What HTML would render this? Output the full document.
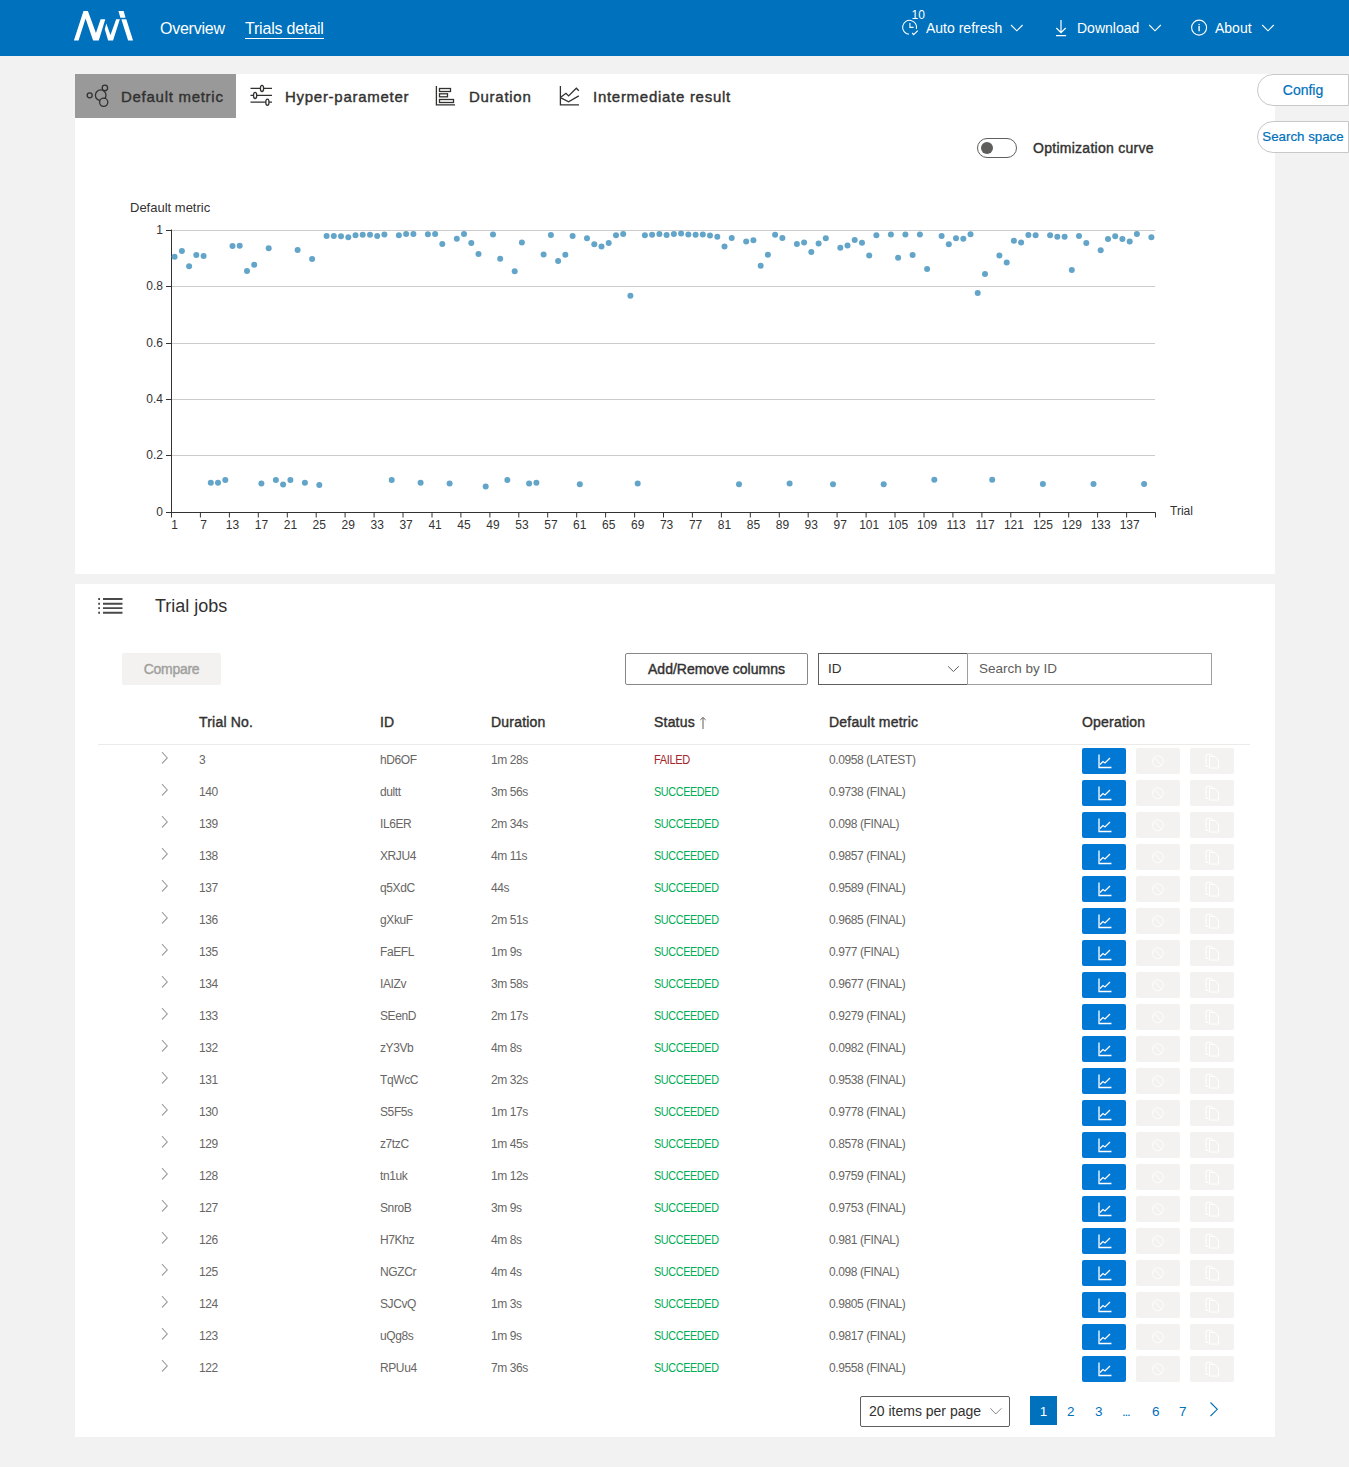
<!DOCTYPE html>
<html><head><meta charset="utf-8"><style>
*{box-sizing:border-box;margin:0;padding:0}
html,body{width:1349px;height:1467px;overflow:hidden;background:#f2f2f2;font-family:"Liberation Sans", sans-serif;color:#323130}
.abs{position:absolute}
#nav{position:absolute;left:0;top:0;width:1349px;height:56px;background:#0071bc;color:#fff}
#nav .t{position:absolute;font-size:16px;line-height:20px;white-space:nowrap}
#nav .r{position:absolute;font-size:14px;line-height:18px;white-space:nowrap}
.panel{position:absolute;left:75px;width:1200px;background:#fff}
.tab{position:absolute;top:74.5px;height:44px;font-size:15px;-webkit-text-stroke:0.4px #323130;line-height:44px;white-space:nowrap;letter-spacing:0.72px;color:#323130}
.side{position:absolute;left:1257px;width:92px;height:32px;border:1px solid #c8c8c8;-webkit-text-stroke:0.2px #0071bc;border-radius:16px 0 0 16px;background:#fff;color:#0071bc;font-size:14px;line-height:30px;text-align:center;white-space:nowrap}
.row{position:absolute;left:98px;width:1152px;height:32px}
.row .c{position:absolute;top:0;line-height:32px;font-size:12px;color:#686664;white-space:nowrap;letter-spacing:-0.4px}
.row .failed{color:#a4262c;transform:scaleX(0.92);transform-origin:0 50%}
.row .succ{color:#00ad56;transform:scaleX(0.9);transform-origin:0 50%}
.chev{position:absolute;left:62px;top:0}
.btn{position:absolute;top:4px;width:44px;height:26px;border-radius:2px}
.b1{left:984px;background:#0078d4}
.b1 svg{position:absolute;left:15px;top:5px}
.b2{left:1038px;background:#f3f2f1}
.b3{left:1092px;background:#f3f2f1}
.pg{top:1396px;font-size:13.5px;line-height:31px;color:#0071bc}
.hd{position:absolute;top:712px;font-size:14px;-webkit-text-stroke:0.4px #323130;line-height:20px;color:#323130;white-space:nowrap;letter-spacing:0.2px}
</style></head><body>
<div id="nav">
  <svg class="abs" style="left:70px;top:6px" width="70" height="40" viewBox="0 0 1349 771">
    <g fill="#fff">
      <polygon points="75,665 260,95 345,95 500,520 590,255 680,255 555,665 445,665 300,240 165,665"/>
      <polygon points="670,450 700,335 780,560 890,255 960,255 830,665 735,665"/>
      <polygon points="990,255 1085,255 1215,665 1120,665"/>
      <polygon points="935,95 1035,95 1070,225 970,225"/>
    </g>
  </svg>
  <svg class="abs" style="left:0;top:0" width="1349" height="56">
    <g fill="none" stroke="#fff" stroke-width="1.1">
      <path d="M909 34.3 A7 7 0 1 1 916.4 29"/>
      <path d="M909.9 23 V27.4 H913.6"/>
      <path d="M912.2 33 L913.6 34.6 L917.8 30.6" stroke-width="1.2"/>
      <path d="M1011 25 L1016.8 30.8 L1022.6 25"/>
      <path d="M1061 20 V32.3 M1056.3 28 L1061 32.6 L1065.7 28 M1056 35.6 H1066.1" stroke-width="1.2"/>
      <path d="M1149.2 25 L1155 30.8 L1160.8 25"/>
      <circle cx="1199.1" cy="27.6" r="7.5"/>
      <path d="M1199.1 26 V31.2" stroke-width="1.4"/>
      <path d="M1262.2 25 L1268 30.8 L1273.8 25"/>
    </g>
    <rect x="1198.4" y="23.9" width="1.4" height="1.3" fill="#fff"/>
  </svg>
  <div class="t" style="left:160px;top:19px;letter-spacing:-0.25px">Overview</div>
  <div class="t" style="left:245px;top:19px;border-bottom:1px solid #fff;height:20px;letter-spacing:-0.2px">Trials detail</div>
  <div class="r" style="left:926px;top:19px">Auto refresh</div>
  <div class="r" style="left:911.5px;top:6px;font-size:12px">10</div>
  <div class="r" style="left:1077px;top:19px">Download</div>
  <div class="r" style="left:1215px;top:19px">About</div>
</div>
<div class="panel" style="top:74px;height:500px"></div>
<div class="abs" style="left:75px;top:74px;width:161px;height:44px;background:#999"></div>
<svg class="abs" style="left:0;top:0" width="600" height="120">
  <g fill="none" stroke="#323130" stroke-width="1.3">
    <circle cx="100.7" cy="95.2" r="5.3" fill="#999"/>
    <circle cx="104.9" cy="87.9" r="2.7" fill="#999"/>
    <circle cx="103.7" cy="102.3" r="4.1" fill="#999"/>
    <circle cx="89.7" cy="95.3" r="2.5"/>
    <path d="M250.5 88.4 H272 M250.5 95.4 H272 M250.5 102.2 H272"/>
    <ellipse cx="262" cy="88.4" rx="1.6" ry="3.1" fill="#fff"/>
    <ellipse cx="255.1" cy="95.4" rx="1.6" ry="3.1" fill="#fff"/>
    <ellipse cx="267.4" cy="102.3" rx="1.6" ry="3.1" fill="#fff"/>
    <path d="M436.4 86 V104.8 H455"/>
    <rect x="439.5" y="88.5" width="11" height="3"/>
    <rect x="439.5" y="93.8" width="8" height="3"/>
    <rect x="439.5" y="99.5" width="14" height="3"/>
    <path d="M560.4 86 V104.8 H579"/>
    <path d="M561 97.1 L566 93.3 L568.6 95.9 L576.3 88.2 L578.8 90.8"/>
    <path d="M561 97.8 L568.6 101.8 L578.8 95.9"/>
  </g>
</svg>
<div class="tab" style="left:121px">Default metric</div>
<div class="tab" style="left:285px">Hyper-parameter</div>
<div class="tab" style="left:469px">Duration</div>
<div class="tab" style="left:593px">Intermediate result</div>
<div class="side" style="top:74px">Config</div>
<div class="side" style="top:121px;font-size:13.3px">Search space</div>
<div class="abs" style="left:977px;top:138px;width:40px;height:20px;border:1px solid #605e5c;border-radius:10px"></div>
<div class="abs" style="left:981px;top:142px;width:12px;height:12px;border-radius:6px;background:#605e5c"></div>
<div class="abs" style="left:1033px;top:139px;font-size:14px;-webkit-text-stroke:0.4px #323130;line-height:18px;white-space:nowrap;letter-spacing:0.27px">Optimization curve</div>
<svg class="chart" width="1349" height="600" viewBox="0 0 1349 600" style="position:absolute;left:0;top:0"><g font-family="Liberation Sans, sans-serif" font-size="12" fill="#333"><line x1="171" y1="455.5" x2="1155" y2="455.5" stroke="#ccc" stroke-width="1"/><line x1="171" y1="399.5" x2="1155" y2="399.5" stroke="#ccc" stroke-width="1"/><line x1="171" y1="343.5" x2="1155" y2="343.5" stroke="#ccc" stroke-width="1"/><line x1="171" y1="286.5" x2="1155" y2="286.5" stroke="#ccc" stroke-width="1"/><line x1="171" y1="230.5" x2="1155" y2="230.5" stroke="#ccc" stroke-width="1"/><line x1="171.5" y1="229.5" x2="171.5" y2="512.5" stroke="#333" stroke-width="1"/><line x1="166" y1="512.5" x2="171.5" y2="512.5" stroke="#333" stroke-width="1"/><text x="163" y="516.1" text-anchor="end">0</text><line x1="166" y1="455.5" x2="171.5" y2="455.5" stroke="#333" stroke-width="1"/><text x="163" y="459.1" text-anchor="end">0.2</text><line x1="166" y1="399.5" x2="171.5" y2="399.5" stroke="#333" stroke-width="1"/><text x="163" y="403.1" text-anchor="end">0.4</text><line x1="166" y1="343.5" x2="171.5" y2="343.5" stroke="#333" stroke-width="1"/><text x="163" y="347.1" text-anchor="end">0.6</text><line x1="166" y1="286.5" x2="171.5" y2="286.5" stroke="#333" stroke-width="1"/><text x="163" y="290.1" text-anchor="end">0.8</text><line x1="166" y1="230.5" x2="171.5" y2="230.5" stroke="#333" stroke-width="1"/><text x="163" y="234.1" text-anchor="end">1</text><line x1="171" y1="512.5" x2="1155.5" y2="512.5" stroke="#333" stroke-width="1"/><line x1="171.5" y1="512.5" x2="171.5" y2="517.5" stroke="#333" stroke-width="1"/><line x1="200.4" y1="512.5" x2="200.4" y2="517.5" stroke="#333" stroke-width="1"/><line x1="229.4" y1="512.5" x2="229.4" y2="517.5" stroke="#333" stroke-width="1"/><line x1="258.3" y1="512.5" x2="258.3" y2="517.5" stroke="#333" stroke-width="1"/><line x1="287.3" y1="512.5" x2="287.3" y2="517.5" stroke="#333" stroke-width="1"/><line x1="316.2" y1="512.5" x2="316.2" y2="517.5" stroke="#333" stroke-width="1"/><line x1="345.1" y1="512.5" x2="345.1" y2="517.5" stroke="#333" stroke-width="1"/><line x1="374.1" y1="512.5" x2="374.1" y2="517.5" stroke="#333" stroke-width="1"/><line x1="403.0" y1="512.5" x2="403.0" y2="517.5" stroke="#333" stroke-width="1"/><line x1="432.0" y1="512.5" x2="432.0" y2="517.5" stroke="#333" stroke-width="1"/><line x1="460.9" y1="512.5" x2="460.9" y2="517.5" stroke="#333" stroke-width="1"/><line x1="489.9" y1="512.5" x2="489.9" y2="517.5" stroke="#333" stroke-width="1"/><line x1="518.8" y1="512.5" x2="518.8" y2="517.5" stroke="#333" stroke-width="1"/><line x1="547.7" y1="512.5" x2="547.7" y2="517.5" stroke="#333" stroke-width="1"/><line x1="576.7" y1="512.5" x2="576.7" y2="517.5" stroke="#333" stroke-width="1"/><line x1="605.6" y1="512.5" x2="605.6" y2="517.5" stroke="#333" stroke-width="1"/><line x1="634.6" y1="512.5" x2="634.6" y2="517.5" stroke="#333" stroke-width="1"/><line x1="663.5" y1="512.5" x2="663.5" y2="517.5" stroke="#333" stroke-width="1"/><line x1="692.4" y1="512.5" x2="692.4" y2="517.5" stroke="#333" stroke-width="1"/><line x1="721.4" y1="512.5" x2="721.4" y2="517.5" stroke="#333" stroke-width="1"/><line x1="750.3" y1="512.5" x2="750.3" y2="517.5" stroke="#333" stroke-width="1"/><line x1="779.3" y1="512.5" x2="779.3" y2="517.5" stroke="#333" stroke-width="1"/><line x1="808.2" y1="512.5" x2="808.2" y2="517.5" stroke="#333" stroke-width="1"/><line x1="837.1" y1="512.5" x2="837.1" y2="517.5" stroke="#333" stroke-width="1"/><line x1="866.1" y1="512.5" x2="866.1" y2="517.5" stroke="#333" stroke-width="1"/><line x1="895.0" y1="512.5" x2="895.0" y2="517.5" stroke="#333" stroke-width="1"/><line x1="924.0" y1="512.5" x2="924.0" y2="517.5" stroke="#333" stroke-width="1"/><line x1="952.9" y1="512.5" x2="952.9" y2="517.5" stroke="#333" stroke-width="1"/><line x1="981.9" y1="512.5" x2="981.9" y2="517.5" stroke="#333" stroke-width="1"/><line x1="1010.8" y1="512.5" x2="1010.8" y2="517.5" stroke="#333" stroke-width="1"/><line x1="1039.7" y1="512.5" x2="1039.7" y2="517.5" stroke="#333" stroke-width="1"/><line x1="1068.7" y1="512.5" x2="1068.7" y2="517.5" stroke="#333" stroke-width="1"/><line x1="1097.6" y1="512.5" x2="1097.6" y2="517.5" stroke="#333" stroke-width="1"/><line x1="1126.6" y1="512.5" x2="1126.6" y2="517.5" stroke="#333" stroke-width="1"/><line x1="1155.5" y1="512.5" x2="1155.5" y2="517.5" stroke="#333" stroke-width="1"/><text x="174.6" y="529" text-anchor="middle">1</text><text x="203.6" y="529" text-anchor="middle">7</text><text x="232.5" y="529" text-anchor="middle">13</text><text x="261.4" y="529" text-anchor="middle">17</text><text x="290.4" y="529" text-anchor="middle">21</text><text x="319.3" y="529" text-anchor="middle">25</text><text x="348.3" y="529" text-anchor="middle">29</text><text x="377.2" y="529" text-anchor="middle">33</text><text x="406.1" y="529" text-anchor="middle">37</text><text x="435.1" y="529" text-anchor="middle">41</text><text x="464.0" y="529" text-anchor="middle">45</text><text x="493.0" y="529" text-anchor="middle">49</text><text x="521.9" y="529" text-anchor="middle">53</text><text x="550.9" y="529" text-anchor="middle">57</text><text x="579.8" y="529" text-anchor="middle">61</text><text x="608.7" y="529" text-anchor="middle">65</text><text x="637.7" y="529" text-anchor="middle">69</text><text x="666.6" y="529" text-anchor="middle">73</text><text x="695.6" y="529" text-anchor="middle">77</text><text x="724.5" y="529" text-anchor="middle">81</text><text x="753.4" y="529" text-anchor="middle">85</text><text x="782.4" y="529" text-anchor="middle">89</text><text x="811.3" y="529" text-anchor="middle">93</text><text x="840.3" y="529" text-anchor="middle">97</text><text x="869.2" y="529" text-anchor="middle">101</text><text x="898.1" y="529" text-anchor="middle">105</text><text x="927.1" y="529" text-anchor="middle">109</text><text x="956.0" y="529" text-anchor="middle">113</text><text x="985.0" y="529" text-anchor="middle">117</text><text x="1013.9" y="529" text-anchor="middle">121</text><text x="1042.9" y="529" text-anchor="middle">125</text><text x="1071.8" y="529" text-anchor="middle">129</text><text x="1100.7" y="529" text-anchor="middle">133</text><text x="1129.7" y="529" text-anchor="middle">137</text><text x="1170" y="515">Trial</text><text x="130" y="212" style="font-size:13px">Default metric</text></g><g fill="#63a4c9"><circle cx="174.6" cy="256.8" r="3"/><circle cx="181.9" cy="251.1" r="3"/><circle cx="189.1" cy="266.3" r="3"/><circle cx="196.3" cy="255.0" r="3"/><circle cx="203.6" cy="255.9" r="3"/><circle cx="210.8" cy="482.8" r="3"/><circle cx="218.0" cy="482.8" r="3"/><circle cx="225.3" cy="479.9" r="3"/><circle cx="232.5" cy="245.9" r="3"/><circle cx="239.7" cy="245.8" r="3"/><circle cx="247.0" cy="271.1" r="3"/><circle cx="254.2" cy="264.8" r="3"/><circle cx="261.4" cy="483.5" r="3"/><circle cx="268.7" cy="248.3" r="3"/><circle cx="275.9" cy="479.9" r="3"/><circle cx="283.1" cy="484.4" r="3"/><circle cx="290.4" cy="479.9" r="3"/><circle cx="297.6" cy="249.9" r="3"/><circle cx="304.9" cy="482.8" r="3"/><circle cx="312.1" cy="258.9" r="3"/><circle cx="319.3" cy="484.9" r="3"/><circle cx="326.6" cy="235.9" r="3"/><circle cx="333.8" cy="235.9" r="3"/><circle cx="341.0" cy="236.2" r="3"/><circle cx="348.3" cy="237.2" r="3"/><circle cx="355.5" cy="235.3" r="3"/><circle cx="362.7" cy="234.8" r="3"/><circle cx="370.0" cy="234.8" r="3"/><circle cx="377.2" cy="235.9" r="3"/><circle cx="384.4" cy="234.5" r="3"/><circle cx="391.7" cy="479.9" r="3"/><circle cx="398.9" cy="235.2" r="3"/><circle cx="406.1" cy="234.0" r="3"/><circle cx="413.4" cy="234.0" r="3"/><circle cx="420.6" cy="482.8" r="3"/><circle cx="427.9" cy="234.2" r="3"/><circle cx="435.1" cy="234.0" r="3"/><circle cx="442.3" cy="243.9" r="3"/><circle cx="449.6" cy="483.4" r="3"/><circle cx="456.8" cy="238.8" r="3"/><circle cx="464.0" cy="234.0" r="3"/><circle cx="471.3" cy="243.0" r="3"/><circle cx="478.5" cy="253.9" r="3"/><circle cx="485.7" cy="486.6" r="3"/><circle cx="493.0" cy="234.6" r="3"/><circle cx="500.2" cy="258.8" r="3"/><circle cx="507.4" cy="479.9" r="3"/><circle cx="514.7" cy="271.3" r="3"/><circle cx="521.9" cy="242.5" r="3"/><circle cx="529.1" cy="483.4" r="3"/><circle cx="536.4" cy="482.8" r="3"/><circle cx="543.6" cy="254.6" r="3"/><circle cx="550.9" cy="235.0" r="3"/><circle cx="558.1" cy="260.9" r="3"/><circle cx="565.3" cy="254.8" r="3"/><circle cx="572.6" cy="235.9" r="3"/><circle cx="579.8" cy="484.3" r="3"/><circle cx="587.0" cy="238.2" r="3"/><circle cx="594.3" cy="244.2" r="3"/><circle cx="601.5" cy="246.5" r="3"/><circle cx="608.7" cy="243.0" r="3"/><circle cx="616.0" cy="235.2" r="3"/><circle cx="623.2" cy="234.0" r="3"/><circle cx="630.4" cy="295.8" r="3"/><circle cx="637.7" cy="483.4" r="3"/><circle cx="644.9" cy="235.3" r="3"/><circle cx="652.1" cy="234.8" r="3"/><circle cx="659.4" cy="233.9" r="3"/><circle cx="666.6" cy="235.1" r="3"/><circle cx="673.9" cy="234.0" r="3"/><circle cx="681.1" cy="233.5" r="3"/><circle cx="688.3" cy="234.5" r="3"/><circle cx="695.6" cy="234.8" r="3"/><circle cx="702.8" cy="234.6" r="3"/><circle cx="710.0" cy="235.5" r="3"/><circle cx="717.3" cy="236.7" r="3"/><circle cx="724.5" cy="246.5" r="3"/><circle cx="731.7" cy="238.1" r="3"/><circle cx="739.0" cy="484.3" r="3"/><circle cx="746.2" cy="241.6" r="3"/><circle cx="753.4" cy="240.2" r="3"/><circle cx="760.7" cy="265.7" r="3"/><circle cx="767.9" cy="254.8" r="3"/><circle cx="775.1" cy="234.8" r="3"/><circle cx="782.4" cy="237.9" r="3"/><circle cx="789.6" cy="483.4" r="3"/><circle cx="796.9" cy="244.0" r="3"/><circle cx="804.1" cy="242.5" r="3"/><circle cx="811.3" cy="252.0" r="3"/><circle cx="818.6" cy="243.5" r="3"/><circle cx="825.8" cy="238.3" r="3"/><circle cx="833.0" cy="484.3" r="3"/><circle cx="840.3" cy="247.8" r="3"/><circle cx="847.5" cy="245.6" r="3"/><circle cx="854.7" cy="239.9" r="3"/><circle cx="862.0" cy="242.8" r="3"/><circle cx="869.2" cy="255.4" r="3"/><circle cx="876.4" cy="235.3" r="3"/><circle cx="883.7" cy="484.3" r="3"/><circle cx="890.9" cy="234.6" r="3"/><circle cx="898.1" cy="257.8" r="3"/><circle cx="905.4" cy="234.5" r="3"/><circle cx="912.6" cy="255.0" r="3"/><circle cx="919.9" cy="234.5" r="3"/><circle cx="927.1" cy="269.1" r="3"/><circle cx="934.3" cy="479.7" r="3"/><circle cx="941.6" cy="235.9" r="3"/><circle cx="948.8" cy="244.2" r="3"/><circle cx="956.0" cy="238.3" r="3"/><circle cx="963.3" cy="238.8" r="3"/><circle cx="970.5" cy="234.2" r="3"/><circle cx="977.7" cy="292.9" r="3"/><circle cx="985.0" cy="274.0" r="3"/><circle cx="992.2" cy="479.7" r="3"/><circle cx="999.4" cy="255.4" r="3"/><circle cx="1006.7" cy="262.6" r="3"/><circle cx="1013.9" cy="240.7" r="3"/><circle cx="1021.1" cy="242.4" r="3"/><circle cx="1028.4" cy="235.1" r="3"/><circle cx="1035.6" cy="235.3" r="3"/><circle cx="1042.9" cy="484.0" r="3"/><circle cx="1050.1" cy="235.2" r="3"/><circle cx="1057.3" cy="236.8" r="3"/><circle cx="1064.6" cy="236.8" r="3"/><circle cx="1071.8" cy="270.0" r="3"/><circle cx="1079.0" cy="236.1" r="3"/><circle cx="1086.3" cy="243.0" r="3"/><circle cx="1093.5" cy="484.0" r="3"/><circle cx="1100.7" cy="250.2" r="3"/><circle cx="1108.0" cy="239.0" r="3"/><circle cx="1115.2" cy="236.3" r="3"/><circle cx="1122.4" cy="238.9" r="3"/><circle cx="1129.7" cy="241.5" r="3"/><circle cx="1136.9" cy="234.0" r="3"/><circle cx="1144.1" cy="484.0" r="3"/><circle cx="1151.4" cy="237.3" r="3"/></g></svg>
<div class="panel" style="top:584px;height:853px"></div>
<svg class="abs" style="left:0;top:580px" width="1349" height="857" viewBox="0 580 1349 857">
  <g stroke="#4a4a4a" stroke-width="1.9">
    <path d="M98.2 599 H100 M98.2 603.7 H100 M98.2 608.1 H100 M98.2 612.8 H100"/>
    <path d="M103 599 H122.5 M103 603.7 H122.5 M103 608.1 H122.5 M103 612.8 H122.5"/>
  </g>
  <g fill="none" stroke="#605e5c" stroke-width="1">
    <path d="M703 718 V729 M700.3 720 L703 717.4 L705.7 720"/>
    <path d="M948.1 666.3 L953.4 671.5 L958.8 666.3"/>
    <path d="M990.4 1408.3 L995.8 1414 L1001.4 1408.3" stroke="#8a8886"/>
    <path d="M1210.5 1402.5 L1217.3 1409.3 L1210.5 1416" stroke="#0071bc" stroke-width="1.1"/>
  </g>
</svg>
<div class="abs" style="left:155px;top:595px;font-size:18px;line-height:22px;white-space:nowrap">Trial jobs</div>
<div class="abs" style="left:122px;top:653px;width:99px;height:32px;background:#f3f2f1;border-radius:2px;color:#a19f9d;font-size:14px;-webkit-text-stroke:0.4px #a19f9d;line-height:32px;text-align:center;letter-spacing:-0.3px">Compare</div>
<div class="abs" style="left:625px;top:653px;width:183px;height:32px;border:1px solid #8a8886;border-radius:2px;font-size:14px;-webkit-text-stroke:0.4px #323130;line-height:30px;text-align:center;letter-spacing:0px">Add/Remove columns</div>
<div class="abs" style="left:818px;top:653px;width:150px;height:32px;border:1px solid #605e5c;font-size:13.5px;line-height:30px;padding-left:9px">ID</div>
<div class="abs" style="left:967px;top:653px;width:245px;height:32px;border:1px solid #a19f9d;font-size:13.5px;line-height:30px;padding-left:11px;color:#605e5c">Search by ID</div>
<div class="hd" style="left:199px">Trial No.</div>
<div class="hd" style="left:380px">ID</div>
<div class="hd" style="left:491px">Duration</div>
<div class="hd" style="left:654px">Status</div>
<div class="hd" style="left:829px">Default metric</div>
<div class="hd" style="left:1082px">Operation</div>
<div class="abs" style="left:98px;top:744px;width:1152px;height:1px;background:#edebe9"></div>
<div class="row" style="top:744px"><svg class="chev" width="20" height="32"><path d="M2 8.2 L7.3 13.9 L2 19.5" fill="none" stroke="#a19f9d" stroke-width="1.1"/></svg><span class="c" style="left:101px">3</span><span class="c" style="left:282px">hD6OF</span><span class="c" style="left:393px">1m 28s</span><span class="c failed" style="left:556px">FAILED</span><span class="c" style="left:731px">0.0958 (LATEST)</span><span class="btn b1"><svg width="16" height="16" viewBox="0 0 16 16"><path d="M2 1.5V14.5H14.5" fill="none" stroke="#fff" stroke-width="1.3"/><path d="M3 11.5L6 8.5L8 10L13 5" fill="none" stroke="#fff" stroke-width="1.3"/></svg></span><span class="btn b2"><svg width="44" height="26"><g fill="none" stroke="#fff" stroke-width="1"><circle cx="21.9" cy="13.3" r="5.5"/><path d="M18 9.4 L25.8 17.2"/></g></svg></span><span class="btn b3"><svg width="44" height="26"><g fill="none" stroke="#fff" stroke-width="1"><path d="M18.5 18.5 H16 V6.5 H21.5 L23 8"/><path d="M19.5 8.5 H25 L28.5 12 V20 H19.5 Z"/></g></svg></span></div><div class="row" style="top:776px"><svg class="chev" width="20" height="32"><path d="M2 8.2 L7.3 13.9 L2 19.5" fill="none" stroke="#a19f9d" stroke-width="1.1"/></svg><span class="c" style="left:101px">140</span><span class="c" style="left:282px">dultt</span><span class="c" style="left:393px">3m 56s</span><span class="c succ" style="left:556px">SUCCEEDED</span><span class="c" style="left:731px">0.9738 (FINAL)</span><span class="btn b1"><svg width="16" height="16" viewBox="0 0 16 16"><path d="M2 1.5V14.5H14.5" fill="none" stroke="#fff" stroke-width="1.3"/><path d="M3 11.5L6 8.5L8 10L13 5" fill="none" stroke="#fff" stroke-width="1.3"/></svg></span><span class="btn b2"><svg width="44" height="26"><g fill="none" stroke="#fff" stroke-width="1"><circle cx="21.9" cy="13.3" r="5.5"/><path d="M18 9.4 L25.8 17.2"/></g></svg></span><span class="btn b3"><svg width="44" height="26"><g fill="none" stroke="#fff" stroke-width="1"><path d="M18.5 18.5 H16 V6.5 H21.5 L23 8"/><path d="M19.5 8.5 H25 L28.5 12 V20 H19.5 Z"/></g></svg></span></div><div class="row" style="top:808px"><svg class="chev" width="20" height="32"><path d="M2 8.2 L7.3 13.9 L2 19.5" fill="none" stroke="#a19f9d" stroke-width="1.1"/></svg><span class="c" style="left:101px">139</span><span class="c" style="left:282px">IL6ER</span><span class="c" style="left:393px">2m 34s</span><span class="c succ" style="left:556px">SUCCEEDED</span><span class="c" style="left:731px">0.098 (FINAL)</span><span class="btn b1"><svg width="16" height="16" viewBox="0 0 16 16"><path d="M2 1.5V14.5H14.5" fill="none" stroke="#fff" stroke-width="1.3"/><path d="M3 11.5L6 8.5L8 10L13 5" fill="none" stroke="#fff" stroke-width="1.3"/></svg></span><span class="btn b2"><svg width="44" height="26"><g fill="none" stroke="#fff" stroke-width="1"><circle cx="21.9" cy="13.3" r="5.5"/><path d="M18 9.4 L25.8 17.2"/></g></svg></span><span class="btn b3"><svg width="44" height="26"><g fill="none" stroke="#fff" stroke-width="1"><path d="M18.5 18.5 H16 V6.5 H21.5 L23 8"/><path d="M19.5 8.5 H25 L28.5 12 V20 H19.5 Z"/></g></svg></span></div><div class="row" style="top:840px"><svg class="chev" width="20" height="32"><path d="M2 8.2 L7.3 13.9 L2 19.5" fill="none" stroke="#a19f9d" stroke-width="1.1"/></svg><span class="c" style="left:101px">138</span><span class="c" style="left:282px">XRJU4</span><span class="c" style="left:393px">4m 11s</span><span class="c succ" style="left:556px">SUCCEEDED</span><span class="c" style="left:731px">0.9857 (FINAL)</span><span class="btn b1"><svg width="16" height="16" viewBox="0 0 16 16"><path d="M2 1.5V14.5H14.5" fill="none" stroke="#fff" stroke-width="1.3"/><path d="M3 11.5L6 8.5L8 10L13 5" fill="none" stroke="#fff" stroke-width="1.3"/></svg></span><span class="btn b2"><svg width="44" height="26"><g fill="none" stroke="#fff" stroke-width="1"><circle cx="21.9" cy="13.3" r="5.5"/><path d="M18 9.4 L25.8 17.2"/></g></svg></span><span class="btn b3"><svg width="44" height="26"><g fill="none" stroke="#fff" stroke-width="1"><path d="M18.5 18.5 H16 V6.5 H21.5 L23 8"/><path d="M19.5 8.5 H25 L28.5 12 V20 H19.5 Z"/></g></svg></span></div><div class="row" style="top:872px"><svg class="chev" width="20" height="32"><path d="M2 8.2 L7.3 13.9 L2 19.5" fill="none" stroke="#a19f9d" stroke-width="1.1"/></svg><span class="c" style="left:101px">137</span><span class="c" style="left:282px">q5XdC</span><span class="c" style="left:393px">44s</span><span class="c succ" style="left:556px">SUCCEEDED</span><span class="c" style="left:731px">0.9589 (FINAL)</span><span class="btn b1"><svg width="16" height="16" viewBox="0 0 16 16"><path d="M2 1.5V14.5H14.5" fill="none" stroke="#fff" stroke-width="1.3"/><path d="M3 11.5L6 8.5L8 10L13 5" fill="none" stroke="#fff" stroke-width="1.3"/></svg></span><span class="btn b2"><svg width="44" height="26"><g fill="none" stroke="#fff" stroke-width="1"><circle cx="21.9" cy="13.3" r="5.5"/><path d="M18 9.4 L25.8 17.2"/></g></svg></span><span class="btn b3"><svg width="44" height="26"><g fill="none" stroke="#fff" stroke-width="1"><path d="M18.5 18.5 H16 V6.5 H21.5 L23 8"/><path d="M19.5 8.5 H25 L28.5 12 V20 H19.5 Z"/></g></svg></span></div><div class="row" style="top:904px"><svg class="chev" width="20" height="32"><path d="M2 8.2 L7.3 13.9 L2 19.5" fill="none" stroke="#a19f9d" stroke-width="1.1"/></svg><span class="c" style="left:101px">136</span><span class="c" style="left:282px">gXkuF</span><span class="c" style="left:393px">2m 51s</span><span class="c succ" style="left:556px">SUCCEEDED</span><span class="c" style="left:731px">0.9685 (FINAL)</span><span class="btn b1"><svg width="16" height="16" viewBox="0 0 16 16"><path d="M2 1.5V14.5H14.5" fill="none" stroke="#fff" stroke-width="1.3"/><path d="M3 11.5L6 8.5L8 10L13 5" fill="none" stroke="#fff" stroke-width="1.3"/></svg></span><span class="btn b2"><svg width="44" height="26"><g fill="none" stroke="#fff" stroke-width="1"><circle cx="21.9" cy="13.3" r="5.5"/><path d="M18 9.4 L25.8 17.2"/></g></svg></span><span class="btn b3"><svg width="44" height="26"><g fill="none" stroke="#fff" stroke-width="1"><path d="M18.5 18.5 H16 V6.5 H21.5 L23 8"/><path d="M19.5 8.5 H25 L28.5 12 V20 H19.5 Z"/></g></svg></span></div><div class="row" style="top:936px"><svg class="chev" width="20" height="32"><path d="M2 8.2 L7.3 13.9 L2 19.5" fill="none" stroke="#a19f9d" stroke-width="1.1"/></svg><span class="c" style="left:101px">135</span><span class="c" style="left:282px">FaEFL</span><span class="c" style="left:393px">1m 9s</span><span class="c succ" style="left:556px">SUCCEEDED</span><span class="c" style="left:731px">0.977 (FINAL)</span><span class="btn b1"><svg width="16" height="16" viewBox="0 0 16 16"><path d="M2 1.5V14.5H14.5" fill="none" stroke="#fff" stroke-width="1.3"/><path d="M3 11.5L6 8.5L8 10L13 5" fill="none" stroke="#fff" stroke-width="1.3"/></svg></span><span class="btn b2"><svg width="44" height="26"><g fill="none" stroke="#fff" stroke-width="1"><circle cx="21.9" cy="13.3" r="5.5"/><path d="M18 9.4 L25.8 17.2"/></g></svg></span><span class="btn b3"><svg width="44" height="26"><g fill="none" stroke="#fff" stroke-width="1"><path d="M18.5 18.5 H16 V6.5 H21.5 L23 8"/><path d="M19.5 8.5 H25 L28.5 12 V20 H19.5 Z"/></g></svg></span></div><div class="row" style="top:968px"><svg class="chev" width="20" height="32"><path d="M2 8.2 L7.3 13.9 L2 19.5" fill="none" stroke="#a19f9d" stroke-width="1.1"/></svg><span class="c" style="left:101px">134</span><span class="c" style="left:282px">IAIZv</span><span class="c" style="left:393px">3m 58s</span><span class="c succ" style="left:556px">SUCCEEDED</span><span class="c" style="left:731px">0.9677 (FINAL)</span><span class="btn b1"><svg width="16" height="16" viewBox="0 0 16 16"><path d="M2 1.5V14.5H14.5" fill="none" stroke="#fff" stroke-width="1.3"/><path d="M3 11.5L6 8.5L8 10L13 5" fill="none" stroke="#fff" stroke-width="1.3"/></svg></span><span class="btn b2"><svg width="44" height="26"><g fill="none" stroke="#fff" stroke-width="1"><circle cx="21.9" cy="13.3" r="5.5"/><path d="M18 9.4 L25.8 17.2"/></g></svg></span><span class="btn b3"><svg width="44" height="26"><g fill="none" stroke="#fff" stroke-width="1"><path d="M18.5 18.5 H16 V6.5 H21.5 L23 8"/><path d="M19.5 8.5 H25 L28.5 12 V20 H19.5 Z"/></g></svg></span></div><div class="row" style="top:1000px"><svg class="chev" width="20" height="32"><path d="M2 8.2 L7.3 13.9 L2 19.5" fill="none" stroke="#a19f9d" stroke-width="1.1"/></svg><span class="c" style="left:101px">133</span><span class="c" style="left:282px">SEenD</span><span class="c" style="left:393px">2m 17s</span><span class="c succ" style="left:556px">SUCCEEDED</span><span class="c" style="left:731px">0.9279 (FINAL)</span><span class="btn b1"><svg width="16" height="16" viewBox="0 0 16 16"><path d="M2 1.5V14.5H14.5" fill="none" stroke="#fff" stroke-width="1.3"/><path d="M3 11.5L6 8.5L8 10L13 5" fill="none" stroke="#fff" stroke-width="1.3"/></svg></span><span class="btn b2"><svg width="44" height="26"><g fill="none" stroke="#fff" stroke-width="1"><circle cx="21.9" cy="13.3" r="5.5"/><path d="M18 9.4 L25.8 17.2"/></g></svg></span><span class="btn b3"><svg width="44" height="26"><g fill="none" stroke="#fff" stroke-width="1"><path d="M18.5 18.5 H16 V6.5 H21.5 L23 8"/><path d="M19.5 8.5 H25 L28.5 12 V20 H19.5 Z"/></g></svg></span></div><div class="row" style="top:1032px"><svg class="chev" width="20" height="32"><path d="M2 8.2 L7.3 13.9 L2 19.5" fill="none" stroke="#a19f9d" stroke-width="1.1"/></svg><span class="c" style="left:101px">132</span><span class="c" style="left:282px">zY3Vb</span><span class="c" style="left:393px">4m 8s</span><span class="c succ" style="left:556px">SUCCEEDED</span><span class="c" style="left:731px">0.0982 (FINAL)</span><span class="btn b1"><svg width="16" height="16" viewBox="0 0 16 16"><path d="M2 1.5V14.5H14.5" fill="none" stroke="#fff" stroke-width="1.3"/><path d="M3 11.5L6 8.5L8 10L13 5" fill="none" stroke="#fff" stroke-width="1.3"/></svg></span><span class="btn b2"><svg width="44" height="26"><g fill="none" stroke="#fff" stroke-width="1"><circle cx="21.9" cy="13.3" r="5.5"/><path d="M18 9.4 L25.8 17.2"/></g></svg></span><span class="btn b3"><svg width="44" height="26"><g fill="none" stroke="#fff" stroke-width="1"><path d="M18.5 18.5 H16 V6.5 H21.5 L23 8"/><path d="M19.5 8.5 H25 L28.5 12 V20 H19.5 Z"/></g></svg></span></div><div class="row" style="top:1064px"><svg class="chev" width="20" height="32"><path d="M2 8.2 L7.3 13.9 L2 19.5" fill="none" stroke="#a19f9d" stroke-width="1.1"/></svg><span class="c" style="left:101px">131</span><span class="c" style="left:282px">TqWcC</span><span class="c" style="left:393px">2m 32s</span><span class="c succ" style="left:556px">SUCCEEDED</span><span class="c" style="left:731px">0.9538 (FINAL)</span><span class="btn b1"><svg width="16" height="16" viewBox="0 0 16 16"><path d="M2 1.5V14.5H14.5" fill="none" stroke="#fff" stroke-width="1.3"/><path d="M3 11.5L6 8.5L8 10L13 5" fill="none" stroke="#fff" stroke-width="1.3"/></svg></span><span class="btn b2"><svg width="44" height="26"><g fill="none" stroke="#fff" stroke-width="1"><circle cx="21.9" cy="13.3" r="5.5"/><path d="M18 9.4 L25.8 17.2"/></g></svg></span><span class="btn b3"><svg width="44" height="26"><g fill="none" stroke="#fff" stroke-width="1"><path d="M18.5 18.5 H16 V6.5 H21.5 L23 8"/><path d="M19.5 8.5 H25 L28.5 12 V20 H19.5 Z"/></g></svg></span></div><div class="row" style="top:1096px"><svg class="chev" width="20" height="32"><path d="M2 8.2 L7.3 13.9 L2 19.5" fill="none" stroke="#a19f9d" stroke-width="1.1"/></svg><span class="c" style="left:101px">130</span><span class="c" style="left:282px">S5F5s</span><span class="c" style="left:393px">1m 17s</span><span class="c succ" style="left:556px">SUCCEEDED</span><span class="c" style="left:731px">0.9778 (FINAL)</span><span class="btn b1"><svg width="16" height="16" viewBox="0 0 16 16"><path d="M2 1.5V14.5H14.5" fill="none" stroke="#fff" stroke-width="1.3"/><path d="M3 11.5L6 8.5L8 10L13 5" fill="none" stroke="#fff" stroke-width="1.3"/></svg></span><span class="btn b2"><svg width="44" height="26"><g fill="none" stroke="#fff" stroke-width="1"><circle cx="21.9" cy="13.3" r="5.5"/><path d="M18 9.4 L25.8 17.2"/></g></svg></span><span class="btn b3"><svg width="44" height="26"><g fill="none" stroke="#fff" stroke-width="1"><path d="M18.5 18.5 H16 V6.5 H21.5 L23 8"/><path d="M19.5 8.5 H25 L28.5 12 V20 H19.5 Z"/></g></svg></span></div><div class="row" style="top:1128px"><svg class="chev" width="20" height="32"><path d="M2 8.2 L7.3 13.9 L2 19.5" fill="none" stroke="#a19f9d" stroke-width="1.1"/></svg><span class="c" style="left:101px">129</span><span class="c" style="left:282px">z7tzC</span><span class="c" style="left:393px">1m 45s</span><span class="c succ" style="left:556px">SUCCEEDED</span><span class="c" style="left:731px">0.8578 (FINAL)</span><span class="btn b1"><svg width="16" height="16" viewBox="0 0 16 16"><path d="M2 1.5V14.5H14.5" fill="none" stroke="#fff" stroke-width="1.3"/><path d="M3 11.5L6 8.5L8 10L13 5" fill="none" stroke="#fff" stroke-width="1.3"/></svg></span><span class="btn b2"><svg width="44" height="26"><g fill="none" stroke="#fff" stroke-width="1"><circle cx="21.9" cy="13.3" r="5.5"/><path d="M18 9.4 L25.8 17.2"/></g></svg></span><span class="btn b3"><svg width="44" height="26"><g fill="none" stroke="#fff" stroke-width="1"><path d="M18.5 18.5 H16 V6.5 H21.5 L23 8"/><path d="M19.5 8.5 H25 L28.5 12 V20 H19.5 Z"/></g></svg></span></div><div class="row" style="top:1160px"><svg class="chev" width="20" height="32"><path d="M2 8.2 L7.3 13.9 L2 19.5" fill="none" stroke="#a19f9d" stroke-width="1.1"/></svg><span class="c" style="left:101px">128</span><span class="c" style="left:282px">tn1uk</span><span class="c" style="left:393px">1m 12s</span><span class="c succ" style="left:556px">SUCCEEDED</span><span class="c" style="left:731px">0.9759 (FINAL)</span><span class="btn b1"><svg width="16" height="16" viewBox="0 0 16 16"><path d="M2 1.5V14.5H14.5" fill="none" stroke="#fff" stroke-width="1.3"/><path d="M3 11.5L6 8.5L8 10L13 5" fill="none" stroke="#fff" stroke-width="1.3"/></svg></span><span class="btn b2"><svg width="44" height="26"><g fill="none" stroke="#fff" stroke-width="1"><circle cx="21.9" cy="13.3" r="5.5"/><path d="M18 9.4 L25.8 17.2"/></g></svg></span><span class="btn b3"><svg width="44" height="26"><g fill="none" stroke="#fff" stroke-width="1"><path d="M18.5 18.5 H16 V6.5 H21.5 L23 8"/><path d="M19.5 8.5 H25 L28.5 12 V20 H19.5 Z"/></g></svg></span></div><div class="row" style="top:1192px"><svg class="chev" width="20" height="32"><path d="M2 8.2 L7.3 13.9 L2 19.5" fill="none" stroke="#a19f9d" stroke-width="1.1"/></svg><span class="c" style="left:101px">127</span><span class="c" style="left:282px">SnroB</span><span class="c" style="left:393px">3m 9s</span><span class="c succ" style="left:556px">SUCCEEDED</span><span class="c" style="left:731px">0.9753 (FINAL)</span><span class="btn b1"><svg width="16" height="16" viewBox="0 0 16 16"><path d="M2 1.5V14.5H14.5" fill="none" stroke="#fff" stroke-width="1.3"/><path d="M3 11.5L6 8.5L8 10L13 5" fill="none" stroke="#fff" stroke-width="1.3"/></svg></span><span class="btn b2"><svg width="44" height="26"><g fill="none" stroke="#fff" stroke-width="1"><circle cx="21.9" cy="13.3" r="5.5"/><path d="M18 9.4 L25.8 17.2"/></g></svg></span><span class="btn b3"><svg width="44" height="26"><g fill="none" stroke="#fff" stroke-width="1"><path d="M18.5 18.5 H16 V6.5 H21.5 L23 8"/><path d="M19.5 8.5 H25 L28.5 12 V20 H19.5 Z"/></g></svg></span></div><div class="row" style="top:1224px"><svg class="chev" width="20" height="32"><path d="M2 8.2 L7.3 13.9 L2 19.5" fill="none" stroke="#a19f9d" stroke-width="1.1"/></svg><span class="c" style="left:101px">126</span><span class="c" style="left:282px">H7Khz</span><span class="c" style="left:393px">4m 8s</span><span class="c succ" style="left:556px">SUCCEEDED</span><span class="c" style="left:731px">0.981 (FINAL)</span><span class="btn b1"><svg width="16" height="16" viewBox="0 0 16 16"><path d="M2 1.5V14.5H14.5" fill="none" stroke="#fff" stroke-width="1.3"/><path d="M3 11.5L6 8.5L8 10L13 5" fill="none" stroke="#fff" stroke-width="1.3"/></svg></span><span class="btn b2"><svg width="44" height="26"><g fill="none" stroke="#fff" stroke-width="1"><circle cx="21.9" cy="13.3" r="5.5"/><path d="M18 9.4 L25.8 17.2"/></g></svg></span><span class="btn b3"><svg width="44" height="26"><g fill="none" stroke="#fff" stroke-width="1"><path d="M18.5 18.5 H16 V6.5 H21.5 L23 8"/><path d="M19.5 8.5 H25 L28.5 12 V20 H19.5 Z"/></g></svg></span></div><div class="row" style="top:1256px"><svg class="chev" width="20" height="32"><path d="M2 8.2 L7.3 13.9 L2 19.5" fill="none" stroke="#a19f9d" stroke-width="1.1"/></svg><span class="c" style="left:101px">125</span><span class="c" style="left:282px">NGZCr</span><span class="c" style="left:393px">4m 4s</span><span class="c succ" style="left:556px">SUCCEEDED</span><span class="c" style="left:731px">0.098 (FINAL)</span><span class="btn b1"><svg width="16" height="16" viewBox="0 0 16 16"><path d="M2 1.5V14.5H14.5" fill="none" stroke="#fff" stroke-width="1.3"/><path d="M3 11.5L6 8.5L8 10L13 5" fill="none" stroke="#fff" stroke-width="1.3"/></svg></span><span class="btn b2"><svg width="44" height="26"><g fill="none" stroke="#fff" stroke-width="1"><circle cx="21.9" cy="13.3" r="5.5"/><path d="M18 9.4 L25.8 17.2"/></g></svg></span><span class="btn b3"><svg width="44" height="26"><g fill="none" stroke="#fff" stroke-width="1"><path d="M18.5 18.5 H16 V6.5 H21.5 L23 8"/><path d="M19.5 8.5 H25 L28.5 12 V20 H19.5 Z"/></g></svg></span></div><div class="row" style="top:1288px"><svg class="chev" width="20" height="32"><path d="M2 8.2 L7.3 13.9 L2 19.5" fill="none" stroke="#a19f9d" stroke-width="1.1"/></svg><span class="c" style="left:101px">124</span><span class="c" style="left:282px">SJCvQ</span><span class="c" style="left:393px">1m 3s</span><span class="c succ" style="left:556px">SUCCEEDED</span><span class="c" style="left:731px">0.9805 (FINAL)</span><span class="btn b1"><svg width="16" height="16" viewBox="0 0 16 16"><path d="M2 1.5V14.5H14.5" fill="none" stroke="#fff" stroke-width="1.3"/><path d="M3 11.5L6 8.5L8 10L13 5" fill="none" stroke="#fff" stroke-width="1.3"/></svg></span><span class="btn b2"><svg width="44" height="26"><g fill="none" stroke="#fff" stroke-width="1"><circle cx="21.9" cy="13.3" r="5.5"/><path d="M18 9.4 L25.8 17.2"/></g></svg></span><span class="btn b3"><svg width="44" height="26"><g fill="none" stroke="#fff" stroke-width="1"><path d="M18.5 18.5 H16 V6.5 H21.5 L23 8"/><path d="M19.5 8.5 H25 L28.5 12 V20 H19.5 Z"/></g></svg></span></div><div class="row" style="top:1320px"><svg class="chev" width="20" height="32"><path d="M2 8.2 L7.3 13.9 L2 19.5" fill="none" stroke="#a19f9d" stroke-width="1.1"/></svg><span class="c" style="left:101px">123</span><span class="c" style="left:282px">uQg8s</span><span class="c" style="left:393px">1m 9s</span><span class="c succ" style="left:556px">SUCCEEDED</span><span class="c" style="left:731px">0.9817 (FINAL)</span><span class="btn b1"><svg width="16" height="16" viewBox="0 0 16 16"><path d="M2 1.5V14.5H14.5" fill="none" stroke="#fff" stroke-width="1.3"/><path d="M3 11.5L6 8.5L8 10L13 5" fill="none" stroke="#fff" stroke-width="1.3"/></svg></span><span class="btn b2"><svg width="44" height="26"><g fill="none" stroke="#fff" stroke-width="1"><circle cx="21.9" cy="13.3" r="5.5"/><path d="M18 9.4 L25.8 17.2"/></g></svg></span><span class="btn b3"><svg width="44" height="26"><g fill="none" stroke="#fff" stroke-width="1"><path d="M18.5 18.5 H16 V6.5 H21.5 L23 8"/><path d="M19.5 8.5 H25 L28.5 12 V20 H19.5 Z"/></g></svg></span></div><div class="row" style="top:1352px"><svg class="chev" width="20" height="32"><path d="M2 8.2 L7.3 13.9 L2 19.5" fill="none" stroke="#a19f9d" stroke-width="1.1"/></svg><span class="c" style="left:101px">122</span><span class="c" style="left:282px">RPUu4</span><span class="c" style="left:393px">7m 36s</span><span class="c succ" style="left:556px">SUCCEEDED</span><span class="c" style="left:731px">0.9558 (FINAL)</span><span class="btn b1"><svg width="16" height="16" viewBox="0 0 16 16"><path d="M2 1.5V14.5H14.5" fill="none" stroke="#fff" stroke-width="1.3"/><path d="M3 11.5L6 8.5L8 10L13 5" fill="none" stroke="#fff" stroke-width="1.3"/></svg></span><span class="btn b2"><svg width="44" height="26"><g fill="none" stroke="#fff" stroke-width="1"><circle cx="21.9" cy="13.3" r="5.5"/><path d="M18 9.4 L25.8 17.2"/></g></svg></span><span class="btn b3"><svg width="44" height="26"><g fill="none" stroke="#fff" stroke-width="1"><path d="M18.5 18.5 H16 V6.5 H21.5 L23 8"/><path d="M19.5 8.5 H25 L28.5 12 V20 H19.5 Z"/></g></svg></span></div>
<div class="abs" style="left:860px;top:1396px;width:150px;height:31px;border:1px solid #605e5c;border-radius:2px;font-size:14px;line-height:29px;padding-left:8px;white-space:nowrap">20 items per page</div>
<div class="abs" style="left:1030px;top:1396px;width:27px;height:29px;background:#0071bc;color:#fff;font-size:13.5px;line-height:31px;text-align:center">1</div>
<div class="abs pg" style="left:1067px">2</div>
<div class="abs pg" style="left:1095px">3</div>
<div class="abs pg" style="left:1122px;letter-spacing:-1.2px">...</div>
<div class="abs pg" style="left:1152px">6</div>
<div class="abs pg" style="left:1179px">7</div>
</body></html>
